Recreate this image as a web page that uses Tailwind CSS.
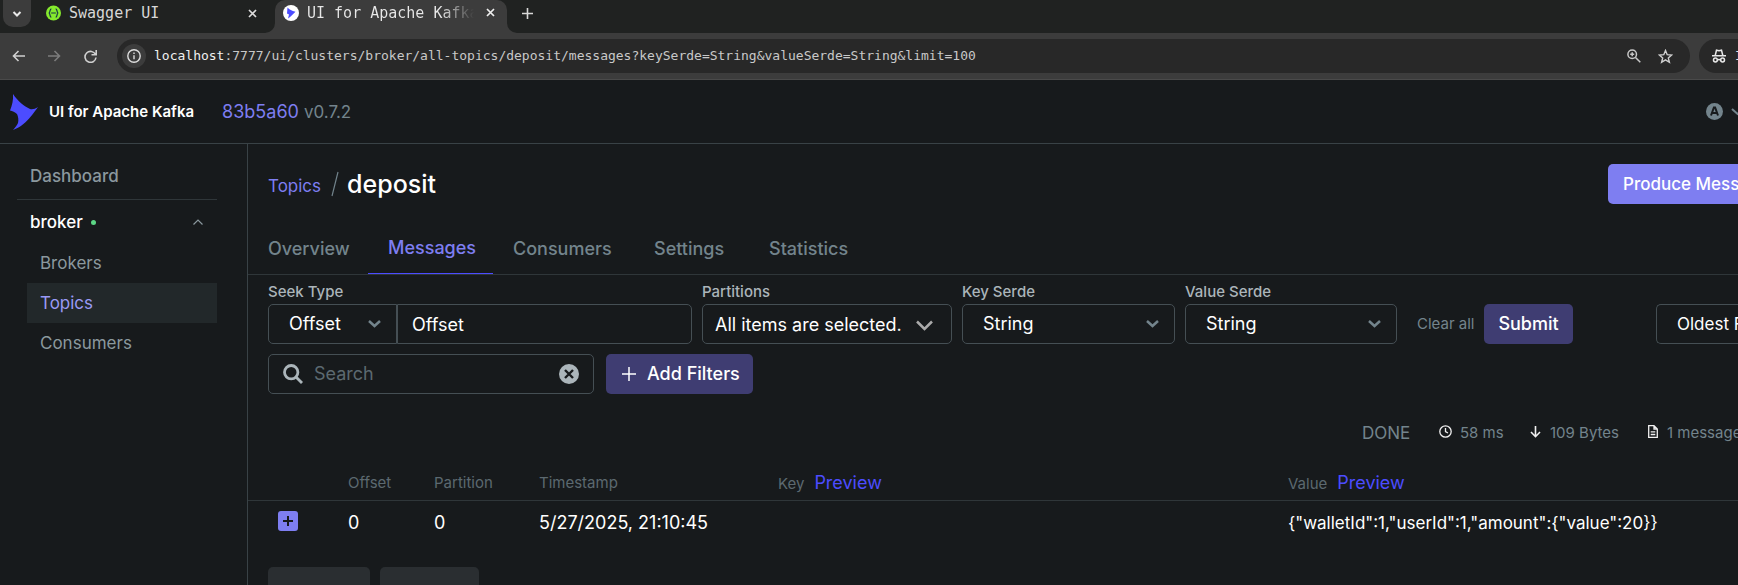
<!DOCTYPE html>
<html lang="en">
<head>
<meta charset="utf-8">
<title>UI for Apache Kafka</title>
<script src="https://cdn.jsdelivr.net/npm/@tailwindcss/browser@4"></script>
</head>
<body class="flex h-screen flex-col overflow-hidden bg-[#171a1c] font-['Inter',sans-serif] text-[18px] leading-6 text-white">

<!-- Browser tabs -->
<div class="flex h-[33px] shrink-0 bg-[#202221] font-['DejaVu_Sans_Mono',monospace] text-[15px] text-[#d8d8d8]">
  <button aria-label="Search tabs" class="ml-[3px] flex h-[27px] w-7 items-center justify-center rounded-b-[10px] bg-[#3c3c3c]">
    <svg width="10" height="8" viewBox="0 0 10 8" fill="none" stroke="#e8e8e8" stroke-width="2"><path d="M1.5 2 5 5.5 8.500 2"/></svg>
  </button>
  <div class="flex h-[26px] w-[244px] items-center pl-[15px]">
    <svg width="15" height="16" viewBox="0 0 16 16" class="shrink-0"><circle cx="8" cy="8" r="8" fill="#85ea2d"/><path d="M5.700 3.500C3.500 3.500 5 7.500 3 8c2 .5.500 4.500 2.700 4.500M10.300 3.500C12.500 3.500 11 7.500 13 8c-2 .5-.5 4.500-2.700 4.500M5.500 8h5" fill="none" stroke="#173647" stroke-width="1.300"/></svg>
    <span class="ml-2 flex-1">Swagger UI</span>
    <button aria-label="Close Swagger UI" class="mr-[18px]"><svg width="9" height="9" viewBox="0 0 9 9" stroke="#dcdcdc" stroke-width="1.700"><path d="M1 1l7 7M8 1 1 8"/></svg></button>
  </div>
  <div class="relative flex h-[33px] w-[232px] items-center rounded-t-[10px] bg-[#3c3c3c] pb-2 pl-2">
    <svg width="10" height="10" viewBox="0 0 10 10" class="absolute bottom-0 -left-[10px]"><path d="M10 0v10H0A10 10 0 0 0 10 0Z" fill="#3c3c3c"/></svg>
    <svg width="10" height="10" viewBox="0 0 10 10" class="absolute -right-[10px] bottom-0"><path d="M0 0v10h10A10 10 0 0 1 0 0Z" fill="#3c3c3c"/></svg>
    <svg width="16" height="16" viewBox="0 0 16 16" class="shrink-0"><circle cx="8" cy="8" r="8" fill="#fff"/><path d="M4.500 2.500C6.500 4.500 8.500 6 12.500 6.700 10 9 8 11.500 5 13.500L6 9.500 4 8.500Z" fill="#4c4cff"/></svg>
    <span class="ml-2 flex-1 overflow-hidden whitespace-nowrap bg-linear-to-r from-[#e8e8e8] from-80% to-transparent bg-clip-text text-transparent">UI for Apache Kafka</span>
    <button aria-label="Close UI for Apache Kafka" class="mr-3 ml-3"><svg width="9" height="9" viewBox="0 0 9 9" stroke="#eee" stroke-width="1.700"><path d="M1 1l7 7M8 1 1 8"/></svg></button>
  </div>
  <button aria-label="New tab" class="ml-[15px] flex h-[26px] items-center"><svg width="11" height="11" viewBox="0 0 11 11" stroke="#d8d8d8" stroke-width="1.600"><path d="M5.500 0v11M0 5.500h11"/></svg></button>
</div>

<!-- Browser toolbar -->
<div class="flex h-[47px] shrink-0 items-center overflow-hidden border-b border-[#4a4a4a] bg-[#3c3c3c] font-['DejaVu_Sans_Mono',monospace]">
  <button aria-label="Back" class="ml-3"><svg width="13" height="12" viewBox="0 0 13 12" fill="none" stroke="#d0d0d0" stroke-width="1.600"><path d="M13 6H1.500M6.500 1l-5 5 5 5"/></svg></button>
  <button aria-label="Forward" class="ml-[23px]"><svg width="13" height="12" viewBox="0 0 13 12" fill="none" stroke="#7c7c7c" stroke-width="1.600"><path d="M0 6h11.500M6.500 1l5 5-5 5"/></svg></button>
  <button aria-label="Reload" class="ml-[23px]"><svg width="13" height="13" viewBox="0 0 13 13" fill="none" stroke="#d0d0d0" stroke-width="1.600"><path d="M11.500 4.500A5.500 5.500 0 1 0 12 7.500M12.200 0v4.800H7.500"/></svg></button>
  <div class="ml-5 flex h-[34px] min-w-0 flex-1 items-center rounded-full bg-[#282828] pl-[5px] pr-[17px]">
    <button aria-label="Site information" class="flex size-6 shrink-0 items-center justify-center rounded-full bg-[#3c3c3c]">
      <svg width="14" height="14" viewBox="0 0 14 14" fill="none" stroke="#dedede" stroke-width="1.400"><circle cx="7" cy="7" r="6.200"/><path d="M7 6.200v4M7 3.500v1.500"/></svg>
    </button>
    <span class="ml-2 flex-1 truncate text-[13px] text-[#c8c8c8]"><span class="text-[#f0f0f0]">localhost</span>:7777/ui/clusters/broker/all-topics/deposit/messages?keySerde=String&amp;valueSerde=String&amp;limit=100</span>
    <button aria-label="Zoom"><svg width="14" height="14" viewBox="0 0 14 14" fill="none" stroke="#c8c8c8" stroke-width="1.500"><circle cx="5.200" cy="5.200" r="4.300"/><path d="M8.500 8.500 13.300 13.300M5.200 3.200v4M3.200 5.200h4"/></svg></button>
    <button aria-label="Bookmark" class="ml-[17px]"><svg width="15" height="15" viewBox="0 0 15 15" fill="none" stroke="#d0d0d0" stroke-width="1.400"><path d="M7.500 1.500 9.200 5.700l4.500.3-3.400 2.900 1.100 4.400-3.900-2.400-3.900 2.400 1.100-4.400L1.300 6l4.500-.3Z"/></svg></button>
  </div>
  <div class="ml-[9px] flex h-[34px] w-[39px] shrink-0 items-center overflow-hidden rounded-l-full bg-[#282828] pl-[13px] text-[13px] text-[#e8e8e8]">
    <svg width="14" height="14" viewBox="0 0 14 14" fill="none" stroke="#e8e8e8" stroke-width="1.500" class="shrink-0"><path d="M0 6.700h14M3.200 6.500 4.500 1.200 7 1.800l2.500-.6 1.300 5.300M5.300 11q1.700-1 3.400 0"/><circle cx="3.400" cy="11" r="1.900"/><circle cx="10.600" cy="11" r="1.900"/></svg>
    <span class="ml-[9px]">Incognito</span>
  </div>
</div>

<!-- Application header -->
<header class="flex h-16 shrink-0 items-center overflow-hidden border-b border-[#394246] pl-[10px]">
  <svg width="28" height="36" viewBox="0 0 28 36" class="shrink-0"><path d="M3 0C8 7.500 14 12 20 15c2.500.8 5-.2 8-2-2 3.200-4.500 6-7 9.300C16 28.500 11 33 3 36c2-2.500 4-4.500 5-7 .8-3 .2-6.500-1-9C5 18 2.500 17 0 16.500 2 12 3.500 6 3 0Z" fill="#4c4cff"/></svg>
  <a href="#" class="ml-[11px] text-[15px] font-semibold">UI for Apache Kafka</a>
  <a href="#" class="ml-7 text-[#7e7ef1]">83b5a60</a>
  <span class="ml-[5px] flex-1 text-[17px] text-[#73848c]">v0.7.2</span>
  <button aria-label="Account" class="flex w-8 shrink-0 items-center gap-2">
    <svg width="17" height="17" viewBox="0 0 17 17" class="shrink-0"><circle cx="8.500" cy="8.500" r="8.500" fill="#73848c"/><path d="M5 12.500 7.900 4.500h1.200l2.900 8M6 10h5" fill="none" stroke="#171a1c" stroke-width="2"/></svg>
    <svg width="13" height="8" viewBox="0 0 13 8" fill="none" stroke="#73848c" stroke-width="2" class="shrink-0"><path d="M1 1l5.500 5L12 1"/></svg>
  </button>
</header>

<div class="flex min-h-0 flex-1">
  <nav class="w-[248px] shrink-0 border-r border-[#394246] pl-[17px] pr-[30px] pt-3 text-[17px] text-[#8b989e]">
    <a href="#" class="flex h-10 items-center pl-[13px] font-medium">Dashboard</a>
    <div class="mt-[3px] border-t border-[#2f3639] pt-0.5">
      <button class="flex h-10 w-full items-center pl-[13px] pr-[14px] font-medium text-white">
        <span>broker</span><span class="ml-2 size-[5px] rounded-full bg-[#5cd685]"></span>
        <svg width="10" height="6" viewBox="0 0 10 6" fill="none" stroke="#8b989e" stroke-width="1.200" class="ml-auto"><path d="M.5 5.500 5 1l4.500 4.500"/></svg>
      </button>
    </div>
    <div class="ml-[10px] mt-px flex flex-col">
      <a href="#" class="flex h-10 items-center pl-[13px]">Brokers</a>
      <a href="#" class="flex h-10 items-center bg-[#22282a] pl-[13px] text-[#9a9af5]">Topics</a>
      <a href="#" class="flex h-10 items-center pl-[13px]">Consumers</a>
    </div>
  </nav>

  <main class="min-w-0 flex-1 overflow-hidden">
    <div class="flex items-center pl-5 pt-5">
      <div class="flex h-10 flex-1 items-center">
        <a href="#" class="pt-1 text-[17px] text-[#7e7ef1]">Topics</a>
        <svg width="8" height="26" viewBox="0 0 8 26" class="ml-[10px]" stroke="#73848c" stroke-width="1.200"><path d="M7 1 1 25"/></svg>
        <h1 class="ml-2 text-[25px] font-medium">deposit</h1>
      </div>
      <button class="h-10 w-[130px] shrink-0 overflow-hidden whitespace-nowrap rounded-l-[5px] bg-[#7e7ef1] pl-[15px] text-left text-[17px] font-medium">Produce Message</button>
    </div>

    <div class="mt-[11px] flex h-[60px] border-b border-[#2f3639] font-medium text-[#73848c]">
      <a href="#" class="flex w-[120px] items-center pl-5 pt-2">Overview</a>
      <a href="#" class="flex w-[125px] items-center border-b border-[#4c4cff] pl-5 pt-2 text-[#7e7ef1]">Messages</a>
      <a href="#" class="flex w-[141px] items-center pl-5 pt-2">Consumers</a>
      <a href="#" class="flex w-[115px] items-center pl-5 pt-2">Settings</a>
      <a href="#" class="flex items-center pl-5 pt-2">Statistics</a>
    </div>

    <form class="pl-5 pt-[7px]">
      <div class="flex items-end">
        <div class="w-[424px] shrink-0">
          <label for="seek" class="block h-[22px] text-[15px] leading-5 font-medium text-[#abb5ba]">Seek Type</label>
          <div class="flex">
            <div class="relative flex items-center">
              <select id="seek" class="h-10 w-[129px] appearance-none rounded-l-[5px] border border-[#454f54] pl-5"><option>Offset</option></select>
              <svg width="13" height="8" viewBox="0 0 13 8" fill="none" stroke="#73848c" stroke-width="2.500" class="pointer-events-none absolute right-4"><path d="M1 1l5.500 5L12 1"/></svg>
            </div>
            <input aria-label="Offset" placeholder="Offset" class="h-10 min-w-0 flex-1 rounded-r-[5px] border border-[#454f54] pl-[14px] placeholder:text-white">
          </div>
        </div>
        <div class="ml-[10px] w-[250px] shrink-0">
          <span class="block h-[22px] text-[15px] leading-5 font-medium text-[#abb5ba]">Partitions</span>
          <button type="button" class="flex h-10 w-full items-center justify-between whitespace-nowrap rounded-[5px] border border-[#454f54] pl-3 pr-[18px] pt-0.5">All items are selected.
            <svg width="17" height="11" viewBox="0 0 17 11" fill="none" stroke="#aaa" stroke-width="2.500"><path d="M1 1.500l7.500 7.500L16 1.500"/></svg></button>
        </div>
        <div class="ml-[10px] w-[213px] shrink-0">
          <label for="key" class="block h-[22px] text-[15px] leading-5 font-medium text-[#abb5ba]">Key Serde</label>
          <div class="relative flex items-center">
            <select id="key" class="h-10 w-full appearance-none rounded-[5px] border border-[#454f54] pl-5"><option>String</option></select>
            <svg width="13" height="8" viewBox="0 0 13 8" fill="none" stroke="#73848c" stroke-width="2.500" class="pointer-events-none absolute right-4"><path d="M1 1l5.500 5L12 1"/></svg>
          </div>
        </div>
        <div class="ml-[10px] w-[212px] shrink-0">
          <label for="value" class="block h-[22px] text-[15px] leading-5 font-medium text-[#abb5ba]">Value Serde</label>
          <div class="relative flex items-center">
            <select id="value" class="h-10 w-full appearance-none rounded-[5px] border border-[#454f54] pl-5"><option>String</option></select>
            <svg width="13" height="8" viewBox="0 0 13 8" fill="none" stroke="#73848c" stroke-width="2.500" class="pointer-events-none absolute right-4"><path d="M1 1l5.500 5L12 1"/></svg>
          </div>
        </div>
        <button type="button" class="ml-5 h-10 w-[57px] shrink-0 whitespace-nowrap text-left text-[15px] text-[#73848c]">Clear all</button>
        <button type="button" class="ml-[10px] h-10 w-[89px] shrink-0 rounded-[5px] bg-[#3f3d72] font-medium">Submit</button>
        <select aria-label="Seek direction" class="ml-auto h-10 w-[82px] shrink-0 appearance-none overflow-hidden rounded-l-[5px] border border-r-0 border-[#454f54] pl-5 text-[17px] text-clip"><option>Oldest First</option></select>
      </div>
      <div class="mt-[10px] flex">
        <label class="flex h-10 w-[326px] items-center rounded-[5px] border border-[#454f54] pl-[14px] pr-[14px]">
          <svg width="20" height="20" viewBox="0 0 20 20" fill="none" stroke="#abb5ba" stroke-width="2.800" class="shrink-0"><circle cx="8.200" cy="8.200" r="6.700"/><path d="M13 13l6 6"/></svg>
          <input aria-label="Search" placeholder="Search" class="ml-[11px] min-w-0 flex-1 outline-none placeholder:text-[#5c6970]">
          <button type="button" aria-label="Clear search" class="shrink-0"><svg width="20" height="20" viewBox="0 0 20 20" class="block"><circle cx="10" cy="10" r="10" fill="#abb5ba"/><path d="M6 6l8 8M14 6l-8 8" stroke="#171a1c" stroke-width="2.400"/></svg></button>
        </label>
        <button type="button" class="ml-3 flex h-10 w-[147px] items-center whitespace-nowrap rounded-[5px] bg-[#3f3d72] pl-4 font-medium">
          <svg width="14" height="14" viewBox="0 0 14 14" stroke="#fff" stroke-width="1.500" class="mr-[11px] shrink-0"><path d="M7 0v14M0 7h14"/></svg>Add Filters</button>
      </div>
    </form>

    <div class="mt-[27px] flex h-6 items-center justify-end overflow-hidden text-[15px] text-[#73848c]">
      <span class="w-[77px] shrink-0 text-[17px]">DONE</span>
      <span class="flex w-[91px] shrink-0 items-center gap-2"><svg width="13" height="13" viewBox="0 0 13 13" fill="none" stroke="#f0f0f0" stroke-width="1.300" class="mb-[3px]"><circle cx="6.500" cy="6.500" r="5.700"/><path d="M6.500 3v3.700L9 8"/></svg>58 ms</span>
      <span class="flex w-[118px] shrink-0 items-center gap-[9px]"><svg width="11" height="12" viewBox="0 0 11 12" fill="none" stroke="#f0f0f0" stroke-width="1.600" class="mb-[3px]"><path d="M5.500 0v10.500M1 6l4.500 4.700L10 6"/></svg>109 Bytes</span>
      <span class="flex w-[90px] shrink-0 items-center gap-[9px] whitespace-nowrap"><svg width="10" height="13" viewBox="0 0 10 13" fill="none" stroke="#f0f0f0" stroke-width="1.300" class="mb-[3px] shrink-0"><path d="M.7.700h5.300l3.300 3.300v8.300H.7ZM6 .7V4h3.300M2.700 6.800h4.600M2.700 9.500h4.600"/></svg>1 messages consumed</span>
    </div>

    <table class="mt-[22px] w-full table-fixed text-left">
      <colgroup><col class="w-[100px]"><col class="w-[86px]"><col class="w-[105px]"><col class="w-[239px]"><col class="w-[510px]"><col></colgroup>
      <thead class="text-[15px] text-[#5c6970]">
        <tr class="h-[33px] border-b border-[#2f3639]">
          <th class="p-0"></th>
          <th class="p-0 font-normal">Offset</th>
          <th class="p-0 font-normal">Partition</th>
          <th class="p-0 font-normal">Timestamp</th>
          <th class="p-0 font-normal">Key<button class="ml-[10px] text-[18px] text-[#4c4cff]">Preview</button></th>
          <th class="p-0 font-normal">Value<button class="ml-[10px] text-[18px] text-[#4c4cff]">Preview</button></th>
        </tr>
      </thead>
      <tbody>
        <tr class="h-[46px]">
          <td class="p-0 pl-[30px]"><button aria-label="Expand message" class="mb-1 flex size-5 items-center justify-center rounded-[3px] bg-[#7e7ef1]"><svg width="10" height="10" viewBox="0 0 10 10" stroke="#171a1c" stroke-width="2"><path d="M5 0v10M0 5h10"/></svg></button></td>
          <td class="p-0">0</td>
          <td class="p-0">0</td>
          <td class="p-0">5/27/2025, 21:10:45</td>
          <td class="p-0"></td>
          <td class="p-0 text-[17px]">{"walletId":1,"userId":1,"amount":{"value":20}}</td>
        </tr>
      </tbody>
    </table>

    <div class="mt-[21px] flex gap-[10px] pl-5">
      <button disabled aria-label="Back" class="h-10 w-[102px] rounded-[5px] bg-[#2a2e31]"></button>
      <button disabled aria-label="Next" class="h-10 w-[99px] rounded-[5px] bg-[#2a2e31]"></button>
    </div>
  </main>
</div>
</body>
</html>
